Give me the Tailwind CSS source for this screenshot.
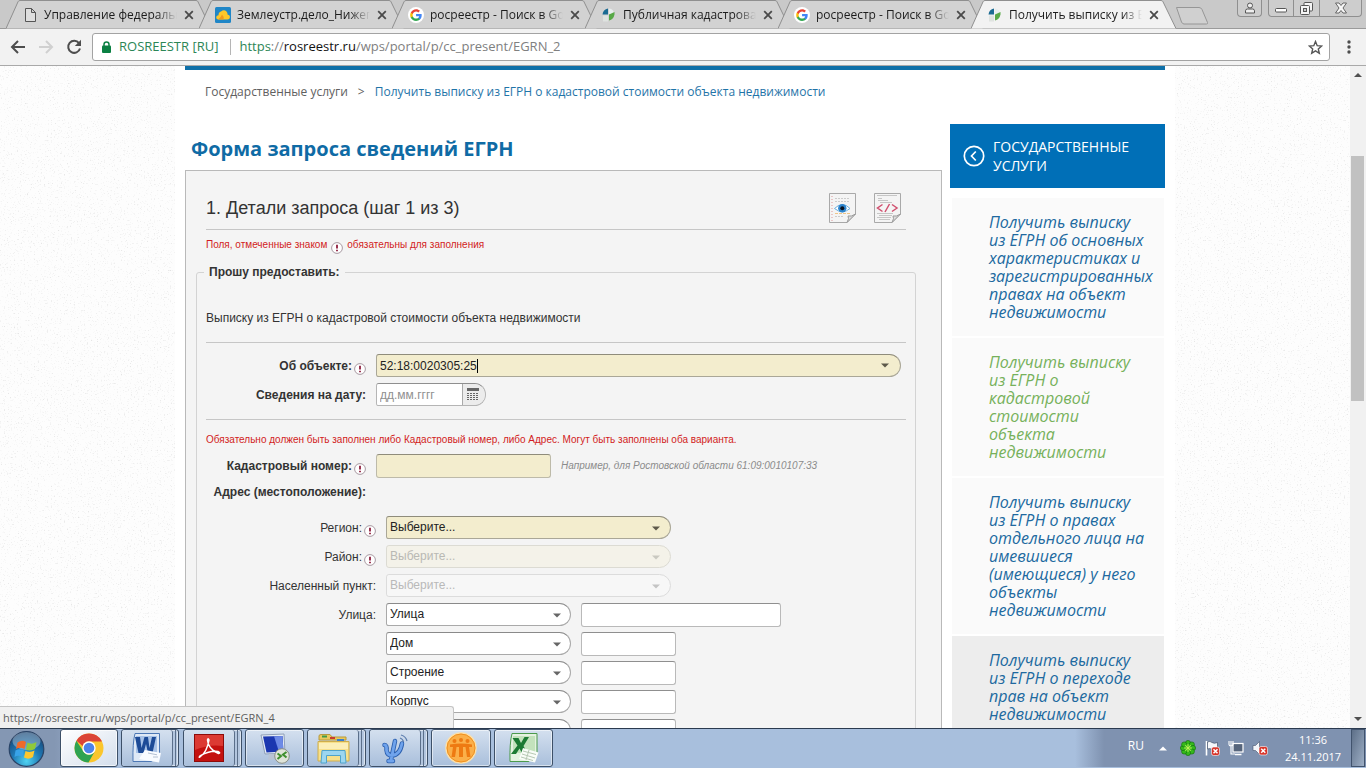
<!DOCTYPE html>
<html lang="ru">
<head>
<meta charset="utf-8">
<title>Получить выписку из ЕГРН</title>
<script src="https://cdn.jsdelivr.net/npm/@tailwindcss/browser@4"></script>
</head>
<body class="h-screen flex flex-col overflow-hidden bg-white font-['Open_Sans',sans-serif] text-[12px] text-[#333]">

<!-- Shared symbols -->
<svg class="hidden" aria-hidden="true">
  <symbol id="tab-shape" viewBox="0 0 205 29"><path d="M0 28.5 L12 1.8 Q12.600 .5 14 .5 H190 Q191.500 .5 192 1.800 L205 28.500" stroke="#8f8f8f"/></symbol>
  <symbol id="close" viewBox="0 0 10 10"><path d="M1.200 1.200 8.800 8.800M8.800 1.200 1.200 8.800" stroke="#4a4a4a" stroke-width="1.800" fill="none"/></symbol>
  <symbol id="google" viewBox="0 0 24 24"><circle cx="12" cy="12" r="12" fill="#fff"/><g transform="translate(2.500 2.500) scale(.8)"><path fill="#4285F4" d="M22.560 12.250c0-.78-.07-1.530-.2-2.250H12v4.260h5.920c-.26 1.370-1.040 2.530-2.210 3.310v2.770h3.570c2.080-1.920 3.280-4.740 3.280-8.090z"/><path fill="#34A853" d="M12 23c2.970 0 5.460-.98 7.280-2.660l-3.570-2.770c-.98.66-2.230 1.060-3.710 1.060-2.860 0-5.290-1.930-6.160-4.530H2.180v2.840C3.990 20.530 7.700 23 12 23z"/><path fill="#FBBC05" d="M5.840 14.090c-.22-.66-.35-1.360-.35-2.090s.13-1.430.35-2.090V7.070H2.180C1.430 8.550 1 10.220 1 12s.43 3.450 1.180 4.930l3.660-2.840z"/><path fill="#EA4335" d="M12 5.380c1.620 0 3.060.56 4.210 1.640l3.150-3.150C17.450 2.090 14.970 1 12 1 7.700 1 3.990 3.470 2.180 7.070l3.660 2.840c.87-2.600 3.300-4.530 6.160-4.530z"/></g></symbol>
  <symbol id="rosreestr" viewBox="0 0 16 16"><path d="M7 1.500v6H1.500Q2 2.500 7 1.500z" fill="#1b6b93"/><path d="M8 1.500Q13 2 13 7H8z" fill="#e8eeee"/><path d="M8 7.500L13.500 5V7.500Q12.500 12.500 8 13.500z" fill="#58a947"/><path d="M2 8.500H7V14.500H2z" fill="#dfe3e0"/></symbol>
  <symbol id="req" viewBox="0 0 12 12"><circle cx="6" cy="6" r="5.400" fill="#fff" stroke="#a89aa2"/><path d="M6 2.800V6.600M6 7.800V9.200" stroke="#8e1d3c" stroke-width="1.800"/></symbol>
  <symbol id="caret" viewBox="0 0 8 5"><path d="M0 .5H8L4 4.500z" fill="currentColor"/></symbol>
  <linearGradient id="paper" x2="1" y2="1"><stop stop-color="#fff"/><stop offset="1" stop-color="#f3f3f3"/></linearGradient>
</svg>

<!-- Tab strip -->
<header class="relative flex h-[29px] shrink-0 border-b border-[#9a9a9a] bg-[#c9c9c9] pl-[6px] text-[#1c1c1c]">
  <nav class="flex" aria-label="Вкладки">
    <div class="relative h-[29px] w-[193px]">
      <svg class="absolute left-0 top-0 h-[29px] w-[205px]" fill="#d2d2d2"><use href="#tab-shape"/></svg>
      <div class="relative flex h-[29px] items-center pl-[17px]">
        <svg class="h-4 w-4 shrink-0" viewBox="0 0 16 16"><path d="M2.500 1.500H8.500L12.500 5.500V14.500H2.500zM8.500 1.500V5.500H12.500" fill="#dedede" stroke="#555"/></svg>
        <a href="#" class="ml-[5px] w-[133px] overflow-hidden whitespace-nowrap mask-r-from-85%">Управление федеральной</a>
        <button aria-label="Закрыть" class="ml-[7px]"><svg class="h-[10px] w-[10px]"><use href="#close"/></svg></button>
      </div>
    </div>
    <div class="relative h-[29px] w-[193px]">
      <svg class="absolute left-0 top-0 h-[29px] w-[205px]" fill="#d2d2d2"><use href="#tab-shape"/></svg>
      <div class="relative flex h-[29px] items-center pl-[16px]">
        <svg class="h-4 w-4 shrink-0" viewBox="0 0 16 16"><rect width="16" height="16" rx="1.500" fill="#1f86c7"/><path d="M3 12.500Q1 12 1.200 10 1.500 8.200 3.500 8.200 3.500 5 6 4.500 9 2 11.500 4.500 12.800 6 12.500 7.500 15 7.800 15 10 14.800 12.500 12.500 12.500z" fill="#fdc82a"/><path d="M3 12.500Q6 10.500 7 7.500 9 9 8.500 12.500z" fill="#f29a1c"/></svg>
        <a href="#" class="ml-[6px] w-[133px] overflow-hidden whitespace-nowrap mask-r-from-85%">Землеустр.дело_Нижегород</a>
        <button aria-label="Закрыть" class="ml-[7px]"><svg class="h-[10px] w-[10px]"><use href="#close"/></svg></button>
      </div>
    </div>
    <div class="relative h-[29px] w-[193px]">
      <svg class="absolute left-0 top-0 h-[29px] w-[205px]" fill="#d2d2d2"><use href="#tab-shape"/></svg>
      <div class="relative flex h-[29px] items-center pl-[16px]">
        <svg class="h-4 w-4 shrink-0"><use href="#google"/></svg>
        <a href="#" class="ml-[6px] w-[133px] overflow-hidden whitespace-nowrap mask-r-from-85%">росреестр - Поиск в Google</a>
        <button aria-label="Закрыть" class="ml-[7px]"><svg class="h-[10px] w-[10px]"><use href="#close"/></svg></button>
      </div>
    </div>
    <div class="relative h-[29px] w-[193px]">
      <svg class="absolute left-0 top-0 h-[29px] w-[205px]" fill="#d2d2d2"><use href="#tab-shape"/></svg>
      <div class="relative flex h-[29px] items-center pl-[16px]">
        <svg class="h-4 w-4 shrink-0"><use href="#rosreestr"/></svg>
        <a href="#" class="ml-[6px] w-[133px] overflow-hidden whitespace-nowrap mask-r-from-85%">Публичная кадастровая</a>
        <button aria-label="Закрыть" class="ml-[7px]"><svg class="h-[10px] w-[10px]"><use href="#close"/></svg></button>
      </div>
    </div>
    <div class="relative h-[29px] w-[193px]">
      <svg class="absolute left-0 top-0 h-[29px] w-[205px]" fill="#d2d2d2"><use href="#tab-shape"/></svg>
      <div class="relative flex h-[29px] items-center pl-[16px]">
        <svg class="h-4 w-4 shrink-0"><use href="#google"/></svg>
        <a href="#" class="ml-[6px] w-[133px] overflow-hidden whitespace-nowrap mask-r-from-85%">росреестр - Поиск в Google</a>
        <button aria-label="Закрыть" class="ml-[7px]"><svg class="h-[10px] w-[10px]"><use href="#close"/></svg></button>
      </div>
    </div>
    <div class="relative h-[29px] w-[193px]">
      <svg class="absolute left-0 top-0 h-[29px] w-[205px]" fill="#f2f2f2"><use href="#tab-shape"/></svg>
      <div class="relative flex h-[29px] items-center pl-[16px]">
        <svg class="h-4 w-4 shrink-0"><use href="#rosreestr"/></svg>
        <a href="#" aria-current="page" class="ml-[6px] w-[133px] overflow-hidden whitespace-nowrap mask-r-from-85%">Получить выписку из ЕГРН</a>
        <button aria-label="Закрыть" class="ml-[7px]"><svg class="h-[10px] w-[10px]"><use href="#close"/></svg></button>
      </div>
    </div>
  </nav>
  <button aria-label="Новая вкладка" class="mt-[7px] ml-[11px] h-[18px] w-[34px]">
    <svg class="h-[18px] w-[34px]" viewBox="0 0 34 18"><path d="M1.500 .5H24Q26 .5 27 2.500L32.500 15.500Q33 17 31.500 17H9Q7.500 17 6.500 15z" fill="#d0d0d0" stroke="#969696"/></svg>
  </button>
  <div class="ml-auto mr-[4px] flex h-[17px] gap-[6px]">
    <button aria-label="Профиль" class="flex w-[25px] items-center justify-center rounded-b-[4px] border border-t-0 border-[#8f8f8f] bg-[#cdcdcd]">
      <svg class="h-3 w-3" viewBox="0 0 12 12" fill="#eee" stroke="#555"><circle cx="6" cy="3.500" r="2.500"/><path d="M1.500 11V8.800Q1.500 7 3.500 7H8.500Q10.500 7 10.500 8.800V11z"/></svg>
    </button>
    <div class="flex rounded-b-[4px] border border-t-0 border-[#8f8f8f] bg-[#cdcdcd]">
      <button aria-label="Свернуть" class="flex w-[25px] items-center justify-center border-r border-[#8f8f8f]"><svg class="h-3 w-3" viewBox="0 0 12 12"><rect x=".5" y="6.500" width="11" height="3.500" rx="1" fill="#fff" stroke="#555"/></svg></button>
      <button aria-label="Восстановить" class="flex w-[26px] items-center justify-center border-r border-[#8f8f8f]"><svg class="h-[13px] w-[13px]" viewBox="0 0 13 13" fill="#f4f4f4" stroke="#555"><rect x="4" y=".5" width="8.500" height="8.500" rx="1"/><rect x=".5" y="3.500" width="9" height="9" rx="1"/><rect x="3.500" y="6.500" width="3" height="3" fill="#ccc"/></svg></button>
      <button aria-label="Закрыть окно" class="flex w-[41px] items-center justify-center"><svg class="h-3 w-3" viewBox="0 0 12 12"><path d="M.5 1H4L6 3.500 8 1H11.500L8 6 11.500 11H8L6 8.500 4 11H.5L4 6z" fill="#f6f6f6" stroke="#666"/></svg></button>
    </div>
  </div>
</header>

<!-- Address bar -->
<div class="flex h-[37px] shrink-0 items-center border-b border-[#a9a9a9] bg-[#f2f2f2] pl-[10px]">
  <button aria-label="Назад"><svg class="h-4 w-4" viewBox="0 0 16 16" fill="none" stroke="#4d4d4d" stroke-width="2"><path d="M15 8H2.500M8 2 2 8 8 14"/></svg></button>
  <button aria-label="Вперёд" class="ml-[12px]"><svg class="h-4 w-4" viewBox="0 0 16 16" fill="none" stroke="#d0d0d0" stroke-width="2"><path d="M1 8H13.500M8 2 14 8 8 14"/></svg></button>
  <button aria-label="Обновить" class="ml-[12px]"><svg class="h-4 w-4" viewBox="0 0 16 16"><path d="M13 4.200A6 6 0 1 0 14 9.500" fill="none" stroke="#4d4d4d" stroke-width="2"/><path d="M15 .8V7H8.800z" fill="#4d4d4d"/></svg></button>
  <div class="ml-[10px] flex h-[28px] flex-1 items-center rounded-[3px] border border-[#a3a3a3] bg-white pl-[9px] pr-[6px] text-[13px]">
    <svg class="h-[12px] w-[9px]" viewBox="0 0 9 12"><path d="M2 5.500V3.500Q2 1 4.500 1 7 1 7 3.500V5.500" fill="none" stroke="#0b8043" stroke-width="1.500"/><rect y="4.500" width="9" height="7.500" rx="1" fill="#0b8043"/></svg>
    <span class="ml-[8px] text-[#2c8656]">ROSREESTR [RU]</span>
    <span class="ml-[12px] h-4 w-px bg-[#b5b5b5]"></span>
    <span class="ml-[8px] flex-1 text-[#808080]"><span class="text-[#2c8656]">https</span>://<span class="text-[#111]">rosreestr.ru</span>/wps/portal/p/cc_present/EGRN_2</span>
    <button aria-label="Добавить в закладки"><svg class="h-[15px] w-[15px]" viewBox="0 0 15 15"><path d="M7.500 1.500 9.200 5.700 13.700 6 10.300 8.900 11.300 13.300 7.500 10.900 3.700 13.300 4.700 8.900 1.300 6 5.800 5.700z" fill="none" stroke="#555" stroke-width="1.400"/></svg></button>
  </div>
  <button aria-label="Меню" class="ml-[17px] mr-[15px]"><svg class="h-[14px] w-[4px]" viewBox="0 0 4 14" fill="#4d4d4d"><circle cx="2" cy="2" r="1.700"/><circle cx="2" cy="7" r="1.700"/><circle cx="2" cy="12" r="1.700"/></svg></button>
</div>

<!-- Viewport -->
<div class="relative flex min-h-0 flex-1">
  <div class="relative min-w-0 flex-1 overflow-hidden bg-[#fdfdfd]">
    <svg class="absolute inset-0 h-full w-full" aria-hidden="true">
      <filter id="grain" x="0" y="0" width="100%" height="100%"><feTurbulence type="fractalNoise" baseFrequency=".7" numOctaves="2" seed="4"/><feColorMatrix values="0 0 0 0 .5  0 0 0 0 .5  0 0 0 0 .5  1.300 0 0 0 -.78"/></filter>
      <rect width="100%" height="100%" filter="url(#grain)"/>
    </svg>
    <main class="relative mx-auto min-h-full w-full max-w-[1000px] bg-white px-[10px]">
      <div class="h-[4px] bg-[#0f70a8]"></div>
      <nav class="flex gap-[10px] pl-[20px] pt-[12px] text-[12px] leading-[20px]" aria-label="Навигация">
        <a href="#" class="text-[#606060]">Государственные услуги</a>
        <span class="text-[#606060]">&gt;</span>
        <a href="#" class="text-[#1f74a8]">Получить выписку из ЕГРН о кадастровой стоимости объекта недвижимости</a>
      </nav>
      <div class="mt-[22px] flex gap-[8px]">
        <section class="min-w-0 flex-1">
          <h1 class="h-[46px] pl-[6px] text-[20px] font-bold leading-[50px] text-[#0f6ba5]">Форма запроса сведений ЕГРН</h1>
          <form class="border border-[#b9b9b9] bg-[#f4f4f4] pb-10 pt-[20px] font-['Liberation_Sans',Arial,sans-serif] text-[12px] leading-[16px]">
            <div class="ml-[20px] mr-[35px] flex h-[39px] items-center border-b border-[#c6c6c6]">
              <h2 class="pb-[4px] text-[18px]">1. Детали запроса (шаг 1 из 3)</h2>
              <button type="button" aria-label="Просмотр" class="mb-[4px] ml-auto"><svg class="h-[30px] w-[27px]" viewBox="0 0 27 30"><path d="M.5 .5H26.500V21L18 29.500H.5z" fill="url(#paper)" stroke="#a9a9a9"/><path d="M26.500 21 18 29.500Q20.500 25 19 23 22 24 26.500 21z" fill="#ddd" stroke="#999"/><path d="M3 3V28" stroke="#d99" stroke-dasharray="1 2"/><path d="M6 5.500H20M6 8.500H21M6 23.500H15" stroke="#ccc" stroke-dasharray="2 1"/><path d="M6 20.500H21" stroke="#edc58a" stroke-dasharray="3 1"/><path d="M5.500 15.500Q13.500 7.500 21 15.500 13.500 22 5.500 15.500z" fill="#fff" stroke="#69afe0"/><circle cx="13.300" cy="15.200" r="4.200" fill="#2d84cc"/><circle cx="13.300" cy="15.200" r="2" fill="#0a1320"/></svg></button>
              <button type="button" aria-label="Показать XML" class="mb-[4px] ml-[18px] mr-[5px]"><svg class="h-[30px] w-[27px]" viewBox="0 0 27 30"><path d="M.5 .5H26.500V21L18 29.500H.5z" fill="url(#paper)" stroke="#a9a9a9"/><path d="M26.500 21 18 29.500Q20.500 25 19 23 22 24 26.500 21z" fill="#ddd" stroke="#999"/><path d="M3 2.500H23M4 5.500H8M4 7.500H14M6 9.500H18M3 20.500H19M5 22.500H18M3 24.500H17M5 26.500H16" stroke="#c6c6c6"/><path d="M8.500 11.500 3.500 15 8.500 18.500M18 11.500 23 15 18 18.500M15.500 11 11 19" fill="none" stroke="#d0506f" stroke-width="1.500"/></svg></button>
            </div>
            <p class="ml-[20px] flex h-[20px] items-center gap-[4px] mt-[5px] text-[10px] text-[#d21c22]">Поля, отмеченные знаком <svg class="mt-[6px] h-3 w-3"><use href="#req"/></svg> обязательны для заполнения</p>
            <fieldset class="ml-[10px] mr-[25px] mt-[9px] rounded-[3px] border border-[#d3d3d3] px-[9px]">
              <legend class="px-[5px] font-bold -ml-[2px]">Прошу предоставить:</legend>
              <p class="border-b border-[#c6c6c6] pb-[16px] pt-[30px]">Выписку из ЕГРН о кадастровой стоимости объекта недвижимости</p>
              <div class="flex flex-col gap-[6px] border-b border-[#c6c6c6] pb-[13px] pt-[11px]">
                <div class="flex h-[23px] items-center gap-[10px]">
                  <label for="obj" class="flex w-[160px] items-center justify-end gap-[2px] font-bold">Об объекте:<svg class="mt-[6px] h-3 w-3"><use href="#req"/></svg></label>
                  <div class="mr-[5px] flex h-[23px] flex-1 items-center rounded-l-[3px] rounded-r-[12px] border border-[#aaa797] border-t-[#8f8c7b] bg-[#f3edce] pl-[3px] pr-[11px]">
                    <input id="obj" value="52:18:0020305:25" class="field-sizing-content bg-transparent text-[#222] outline-none">
                    <span class="h-[14px] w-px bg-black"></span>
                    <svg class="ml-auto h-[5px] w-[8px] text-[#5d594a]"><use href="#caret"/></svg>
                  </div>
                </div>
                <div class="flex h-[23px] items-center gap-[10px]">
                  <label for="date" class="w-[160px] text-right font-bold">Сведения на дату:</label>
                  <div class="flex h-[23px] w-[110px] overflow-hidden rounded-l-[3px] rounded-r-[12px] border border-[#b5b5b5] border-t-[#8f8f8f]">
                    <input id="date" placeholder="дд.мм.гггг" class="w-[86px] border-r border-[#aaa] bg-white pl-[3px] outline-none placeholder:text-[#8f8f8f]">
                    <button type="button" aria-label="Календарь" class="flex flex-1 items-center bg-[#ececec] pl-[4px]"><svg class="h-[13px] w-[12px]" viewBox="0 0 12 13" fill="#666"><path d="M0 0h12v3H0zM0 5h2v1H0zM3 5h2v1H3zM6 5h2v1H6zM9 5h2v1H9zM0 7h2v1H0zM3 7h2v1H3zM6 7h2v1H6zM9 7h2v1H9zM0 9h2v1H0zM3 9h2v1H3zM6 9h2v1H6zM9 9h2v1H9zM0 11h2v1H0zM3 11h2v1H3zM6 11h2v1H6zM9 11h2v1H9z"/></svg></button>
                  </div>
                </div>
              </div>
              <p class="mt-[12px] text-[10px] text-[#d21c22]">Обязательно должен быть заполнен либо Кадастровый номер, либо Адрес. Могут быть заполнены оба варианта.</p>
              <div class="mt-[6px] flex h-[24px] items-center gap-[10px]">
                <label for="cad" class="flex w-[160px] items-center justify-end gap-[2px] font-bold">Кадастровый номер:<svg class="mt-[6px] h-3 w-3"><use href="#req"/></svg></label>
                <input id="cad" class="h-[24px] w-[175px] rounded-[3px] border border-[#bdbaa9] border-t-[#8f8c7b] bg-[#f3edce] px-[3px]">
                <span class="text-[10px] italic text-[#8b8b8b]">Например, для Ростовской области 61:09:0010107:33</span>
              </div>
              <p class="mt-[6px] w-[160px] text-right font-bold">Адрес (местоположение):</p>
              <div class="mt-[16px] flex flex-col gap-[5px]">
                <div class="flex h-[24px] items-start gap-[10px]">
                  <label for="region" class="flex h-[24px] w-[170px] items-center justify-end gap-[2px]">Регион:<svg class="mt-[6px] h-3 w-3"><use href="#req"/></svg></label>
                  <div class="relative"><select id="region" class="h-[23px] w-[285px] appearance-none rounded-l-[3px] rounded-r-[12px] border border-[#aaa797] border-t-[#8f8c7b] bg-[#f3edce] pb-[2px] pl-[3px] text-[#222]"><option>Выберите...</option></select><svg class="pointer-events-none absolute right-[11px] top-[10px] h-[5px] w-[8px] text-[#5d594a]"><use href="#caret"/></svg></div>
                </div>
                <div class="flex h-[24px] items-start gap-[10px]">
                  <label for="district" class="flex h-[24px] w-[170px] items-center justify-end gap-[2px]">Район:<svg class="mt-[6px] h-3 w-3"><use href="#req"/></svg></label>
                  <div class="relative"><select id="district" disabled class="h-[23px] w-[285px] appearance-none rounded-l-[3px] rounded-r-[12px] border border-[#dcdbd3] bg-[#f4f2e9] pb-[2px] pl-[3px] text-[#b9b9b4] opacity-100"><option>Выберите...</option></select><svg class="pointer-events-none absolute right-[11px] top-[10px] h-[5px] w-[8px] text-[#c9c8c0]"><use href="#caret"/></svg></div>
                </div>
                <div class="flex h-[24px] items-start gap-[10px]">
                  <label for="town" class="flex h-[24px] w-[170px] items-center justify-end">Населенный пункт:</label>
                  <div class="relative"><select id="town" disabled class="h-[23px] w-[285px] appearance-none rounded-l-[3px] rounded-r-[12px] border border-[#dcdcdc] bg-[#f7f7f7] pb-[2px] pl-[3px] text-[#b9b9b9] opacity-100"><option>Выберите...</option></select><svg class="pointer-events-none absolute right-[11px] top-[10px] h-[5px] w-[8px] text-[#c4c4c4]"><use href="#caret"/></svg></div>
                </div>
                <div class="flex h-[24px] items-start gap-[10px]">
                  <label for="street" class="flex h-[24px] w-[170px] items-center justify-end">Улица:</label>
                  <div class="relative"><select id="street" class="h-[23px] w-[185px] appearance-none rounded-l-[3px] rounded-r-[12px] border border-[#a9a9a9] border-t-[#8a8a8a] bg-white pb-[2px] pl-[3px] text-[#222]"><option>Улица</option></select><svg class="pointer-events-none absolute right-[10px] top-[10px] h-[5px] w-[8px] text-[#666]"><use href="#caret"/></svg></div>
                  <input aria-label="Название улицы" class="h-[24px] w-[200px] rounded-[3px] border border-[#b9b9b9] border-t-[#8f8f8f] bg-white px-[3px]">
                </div>
                <div class="flex h-[24px] items-start gap-[10px] pl-[180px]">
                  <div class="relative"><select aria-label="Дом" class="h-[23px] w-[185px] appearance-none rounded-l-[3px] rounded-r-[12px] border border-[#a9a9a9] border-t-[#8a8a8a] bg-white pb-[2px] pl-[3px] text-[#222]"><option>Дом</option></select><svg class="pointer-events-none absolute right-[10px] top-[10px] h-[5px] w-[8px] text-[#666]"><use href="#caret"/></svg></div>
                  <input aria-label="Номер дома" class="h-[24px] w-[95px] rounded-[3px] border border-[#b9b9b9] border-t-[#8f8f8f] bg-white px-[3px]">
                </div>
                <div class="flex h-[24px] items-start gap-[10px] pl-[180px]">
                  <div class="relative"><select aria-label="Строение" class="h-[23px] w-[185px] appearance-none rounded-l-[3px] rounded-r-[12px] border border-[#a9a9a9] border-t-[#8a8a8a] bg-white pb-[2px] pl-[3px] text-[#222]"><option>Строение</option></select><svg class="pointer-events-none absolute right-[10px] top-[10px] h-[5px] w-[8px] text-[#666]"><use href="#caret"/></svg></div>
                  <input aria-label="Номер строения" class="h-[24px] w-[95px] rounded-[3px] border border-[#b9b9b9] border-t-[#8f8f8f] bg-white px-[3px]">
                </div>
                <div class="flex h-[24px] items-start gap-[10px] pl-[180px]">
                  <div class="relative"><select aria-label="Корпус" class="h-[23px] w-[185px] appearance-none rounded-l-[3px] rounded-r-[12px] border border-[#a9a9a9] border-t-[#8a8a8a] bg-white pb-[2px] pl-[3px] text-[#222]"><option>Корпус</option></select><svg class="pointer-events-none absolute right-[10px] top-[10px] h-[5px] w-[8px] text-[#666]"><use href="#caret"/></svg></div>
                  <input aria-label="Номер корпуса" class="h-[24px] w-[95px] rounded-[3px] border border-[#b9b9b9] border-t-[#8f8f8f] bg-white px-[3px]">
                </div>
                <div class="flex h-[24px] items-start gap-[10px] pl-[180px]">
                  <select aria-label="Помещение" class="h-[23px] w-[185px] appearance-none rounded-l-[3px] rounded-r-[12px] border border-[#a9a9a9] border-t-[#8a8a8a] bg-white"></select>
                  <input aria-label="Номер помещения" class="h-[24px] w-[95px] rounded-[3px] border border-[#b9b9b9] border-t-[#8f8f8f] bg-white px-[3px]">
                </div>
              </div>
            </fieldset>
          </form>
        </section>

        <aside class="w-[215px] shrink-0">
          <a href="#" class="flex h-[64px] items-center gap-[8px] bg-[#006fb7] pl-[13px] text-[14px] uppercase leading-[19px] text-white">
            <svg class="h-[22px] w-[22px] shrink-0" viewBox="0 0 22 22" fill="none" stroke="#fff" stroke-width="1.700"><circle cx="11" cy="11" r="9.700"/><path d="M12.800 6.500 8.500 11 12.800 15.500"/></svg>
            <span>Государственные услуги</span>
          </a>
          <nav class="ml-[2px] mr-px mt-[10px] flex flex-col gap-[2px] text-[16px] italic leading-[18px] text-[#20699f]" aria-label="Услуги">
            <a href="#" class="bg-[#fafafa] py-[15px] pl-[37px]">Получить выписку<br>из ЕГРН об основных<br>характеристиках и<br>зарегистрированных<br>правах на объект<br>недвижимости</a>
            <a href="#" class="bg-[#fafafa] py-[15px] pl-[37px] text-[#76b15b]">Получить выписку<br>из ЕГРН о<br>кадастровой<br>стоимости<br>объекта<br>недвижимости</a>
            <a href="#" class="bg-[#fafafa] py-[15px] pl-[37px]">Получить выписку<br>из ЕГРН о правах<br>отдельного лица на<br>имевшиеся<br>(имеющиеся) у него<br>объекты<br>недвижимости</a>
            <a href="#" class="bg-[#ededed] py-[15px] pl-[37px]">Получить выписку<br>из ЕГРН о переходе<br>прав на объект<br>недвижимости</a>
          </nav>
        </aside>
      </div>
    </main>
  </div>

  <div class="flex w-[16px] shrink-0 flex-col items-center bg-[#f1f1f1]" aria-hidden="true">
    <svg class="h-[17px] w-[16px] shrink-0" viewBox="0 0 16 17"><path d="M4 11 8 7 12 11z" fill="#505050"/></svg>
    <div class="min-h-0 w-full flex-1 px-px pt-[73px]"><div class="h-[245px] w-[13px] bg-[#c1c1c1]"></div></div>
    <svg class="h-[17px] w-[16px] shrink-0" viewBox="0 0 16 17"><path d="M4 6 8 10 12 6z" fill="#505050"/></svg>
  </div>

  <div class="absolute bottom-0 left-0 h-[22px] w-[454px] rounded-tr-[3px] border-r border-t border-[#c4c4c4] bg-[#f0f0f0] pl-[3px] text-[11px] leading-[22px] text-[#5f5f5f]">https://rosreestr.ru/wps/portal/p/cc_present/EGRN_4</div>
</div>

<!-- Taskbar -->
<footer class="flex h-[40px] shrink-0 items-stretch border-t border-[#2b3a4f] bg-linear-to-r from-[#8497b3] from-4% via-[#a8bfdd] via-8% to-[#a8bfdd] pb-px">
  <button aria-label="Пуск" class="ml-[8px] w-[37px]">
    <svg class="h-[37px] w-[37px]" viewBox="0 0 37 37"><defs><radialGradient id="orb" cx=".5" cy=".85" r=".9"><stop stop-color="#4fd3f2"/><stop offset=".45" stop-color="#1f79b5"/><stop offset="1" stop-color="#123a68"/></radialGradient></defs><circle cx="18.500" cy="19" r="17.300" fill="url(#orb)" stroke="#2a4467" stroke-width="1.200"/><ellipse cx="18.500" cy="11" rx="14" ry="9" fill="#fff" opacity=".32"/><path d="M9.500 12.500Q14 9.500 18 12L16.500 19Q12.500 16.500 8 19z" fill="#ef6a2a"/><path d="M19.500 12.500Q23.500 15 28.500 12L27 19Q22.500 21.500 18 19.500z" fill="#8fc93a"/><path d="M7.500 20.500Q12 18 16 20.500L14.500 27Q10.500 24.500 6.500 27z" fill="#38a3e8"/><path d="M17.500 21Q22 23 26.500 20.500L25 27Q20.500 30 16 27.500z" fill="#fdc72f"/></svg>
  </button>
  <button aria-label="Chrome" class="ml-[15px] flex w-[58px] items-center justify-center rounded-[3px] border border-[#3d5068] bg-linear-to-br from-white to-[#d3deec] shadow-[inset_0_0_0_1px_#ffffffaa]">
    <svg class="h-[30px] w-[30px]" viewBox="0 0 30 30"><circle cx="15" cy="15" r="14.500" fill="#fbc62c"/><path d="M2.440 7.750A14.500 14.500 0 0 1 27.560 7.750L27.800 8.400H15A6.600 6.600 0 0 0 8.700 13z" fill="#db4437"/><path d="M2.440 7.750A14.500 14.500 0 0 0 14.500 29.500L20.700 18.400A6.600 6.600 0 0 1 9.300 18.300z" fill="#2ea352"/><circle cx="15" cy="15" r="6.700" fill="#fff"/><circle cx="15" cy="15" r="5.300" fill="#4c83ea"/></svg>
  </button>
  <button aria-label="Word" class="ml-[3px] flex w-[58px] rounded-[3px] border border-[#3d5068] bg-[#b3c6df] shadow-[inset_0_0_0_1px_#ffffff88]">
    <span class="flex h-full w-[51px] items-center justify-center rounded-[3px] border-r border-[#5b6f8a] bg-linear-to-b from-[#d4e0ef] to-[#a9bfdb]">
      <svg class="h-[30px] w-[30px]" viewBox="0 0 30 30"><path d="M3 .5H27.500V20L20 28.500H1Q.5 10 3 .5z" fill="#dfe9f6" stroke="#4d78b5"/><path d="M4 3H25V20H4z" fill="#a9c3e8"/><path d="M3 4H8L9.500 15 12.500 4H16L17.500 15 20 4H24L20.500 20H16L14 11 11.500 20H6.500z" fill="#1d4b97"/><path d="M13 17 29 20 27 29.500 7 26z" fill="#f8fbff"/><path d="M16 20 25 21.800M21 24H26" stroke="#b4c0d2"/></svg>
    </span><span class="h-full w-[3px] border-r border-[#5b6f8a]"></span>
  </button>
  <button aria-label="Acrobat Reader" class="ml-[4px] flex w-[59px] rounded-[3px] border border-[#3d5068] bg-[#b3c6df] shadow-[inset_0_0_0_1px_#ffffff88]">
    <span class="flex h-full w-[51px] items-center justify-center rounded-[3px] border-r border-[#5b6f8a] bg-linear-to-b from-[#d4e0ef] to-[#a9bfdb]">
      <svg class="h-[28px] w-[30px]" viewBox="0 0 30 28"><rect x=".5" y=".5" width="29" height="27" fill="#c4110f" stroke="#8d0b0a"/><path d="M1 1H29V12Q15 10 1 16z" fill="#dc3a33"/><path d="M6 23Q13 18 15 6 14 3.500 13.500 6 14 15 24.500 19.500 27 19 24 17.500 15 16.500 6 22 4.500 24 6 23z" fill="none" stroke="#fff" stroke-width="1.500"/></svg>
    </span><span class="h-full w-[3px] border-r border-[#5b6f8a]"></span>
  </button>
  <button aria-label="Удалённый рабочий стол" class="ml-[3px] flex w-[59px] items-center justify-center rounded-[3px] border border-[#3d5068] bg-linear-to-b from-[#d4e0ef] to-[#a9bfdb] shadow-[inset_0_0_0_1px_#ffffff88]">
    <svg class="h-[31px] w-[31px]" viewBox="0 0 31 31"><path d="M2 2 25 1 26 20 6 21z" fill="#e4ebf5" stroke="#8fa0b8"/><path d="M4 3.500 23.500 3 24.500 18.500 7.500 19.500z" fill="#1b37b0"/><path d="M15 3.200 23.500 3 24.500 18.500 20 19z" fill="#6d8ae6"/><path d="M10 21 18 20.500 20 26 9 27z" fill="#b9c4d4"/><circle cx="23" cy="23" r="7.300" fill="#dfe4d9" stroke="#8a8f86"/><path d="M18.500 20.500 22 23 18.500 26M27.500 19 24 21.500 27.500 24.500" fill="none" stroke="#3f8f2e" stroke-width="2"/></svg>
  </button>
  <button aria-label="Проводник" class="ml-[3px] flex w-[59px] rounded-[3px] border border-[#3d5068] bg-[#b3c6df] shadow-[inset_0_0_0_1px_#ffffff88]">
    <span class="flex h-full w-[51px] items-center justify-center rounded-[3px] border-r border-[#5b6f8a] bg-linear-to-b from-[#d4e0ef] to-[#a9bfdb]">
      <svg class="h-[31px] w-[33px]" viewBox="0 0 33 31"><path d="M2 3Q2 1.500 4 1.500H13L15 4H29V7H2z" fill="#e9c95e" stroke="#b89a3c"/><path d="M5 2.500h5v2H5z" fill="#3f9a46"/><path d="M13 4h5v2H13z" fill="#c93b30"/><path d="M20 6h7v2H20z" fill="#3a7fd0"/><path d="M1 8.500H32V28H1z" fill="#f7e08b" stroke="#cfae4c"/><path d="M2 10H31V16H2z" fill="#fcefb8"/><path d="M5 17.500H28L29 30H23.500V22.500H9.500V30H4z" fill="#9bd6f0" stroke="#4fa3ca"/></svg>
    </span><span class="h-full w-[3px] border-r border-[#5b6f8a]"></span>
  </button>
  <button aria-label="Система" class="ml-[3px] flex w-[59px] rounded-[3px] border border-[#3d5068] bg-[#b3c6df] shadow-[inset_0_0_0_1px_#ffffff88]">
    <span class="flex h-full w-[51px] items-center justify-center rounded-[3px] border-r border-[#5b6f8a] bg-linear-to-b from-[#d4e0ef] to-[#a9bfdb]">
      <svg class="h-[31px] w-[28px]" viewBox="0 0 28 31" fill="none"><g stroke-linecap="round"><path d="M3.500 12Q6 12 5.500 17 6 22.500 11 22.500 19 22 21 10.500M14 8 10 27M7.500 28H12" stroke="#2b5fae" stroke-width="4.500"/><path d="M3.500 12Q6 12 5.500 17 6 22.500 11 22.500 19 22 21 10.500M14 8 10 27M7.500 28H12" stroke="#6fa3ec" stroke-width="2.800"/></g><path d="M19 5Q22 6 22.500 9M20 2Q25 3.500 26 8" stroke="#5e7fae" stroke-width="1.300"/></svg>
    </span><span class="h-full w-[3px] border-r border-[#5b6f8a]"></span>
  </button>
  <button aria-label="Росреестр" class="ml-[3px] flex w-[60px] items-center justify-center rounded-[3px] border border-[#3d5068] bg-linear-to-b from-[#d4e0ef] to-[#a9bfdb] shadow-[inset_0_0_0_1px_#ffffff88]">
    <svg class="h-[32px] w-[32px]" viewBox="0 0 32 32"><circle cx="16" cy="16" r="15" fill="#fbb04a" stroke="#fde0a8" stroke-width="1.500"/><circle cx="16" cy="16" r="14" fill="none" stroke="#f0901f"/><g fill="#ee7a12"><circle cx="9.500" cy="9" r="2"/><circle cx="16" cy="8" r="2"/><circle cx="22.500" cy="9" r="2"/><path d="M5 12.500Q16 10.500 27 12.500V15H24L25.500 25H22L20.500 15H18V25H14V15H11.500L10 25H6.500L8 15H5z"/></g></svg>
  </button>
  <button aria-label="Excel" class="ml-[3px] flex w-[59px] items-center justify-center rounded-[3px] border border-[#3d5068] bg-linear-to-b from-[#d4e0ef] to-[#a9bfdb] shadow-[inset_0_0_0_1px_#ffffff88]">
    <svg class="h-[30px] w-[30px]" viewBox="0 0 30 30"><path d="M3 .5H28V20L20 28.500H1Q.5 10 3 .5z" fill="#e4f2e0" stroke="#4b9a4c"/><path d="M4 3H26V20H4z" fill="#c3e2bc"/><path d="M3.500 5H9.500L12 10 15.500 4H20L14.500 13 19 21H13.500L10.500 15.500 7 21H2L8.500 12.500z" fill="#1c7a33"/><path d="M14 15 29.500 19.500 26 29.500 10 26z" fill="#f9fdf8"/><path d="M14 18 27 21.500M13 21 26 25M12 24 24 27.500M20 17 17 27" stroke="#b7c9b4"/></svg>
  </button>

  <div class="ml-auto flex items-center bg-linear-to-r from-[#a8bfdd] to-[#7f92b0] to-10% pl-[53px] text-white">
    <span class="text-[12px] leading-[16px] pb-1">RU</span>
    <svg class="ml-[15px] h-[5px] w-[8px]" viewBox="0 0 8 5"><path d="M0 4.500 4 .5 8 4.500z" fill="#fff"/></svg>
    <svg class="ml-[13px] h-4 w-4" viewBox="0 0 16 16"><g fill="#35b81c" stroke="#0f6a0a" stroke-width=".6"><circle cx="8" cy="3" r="2.600"/><circle cx="11.800" cy="4.500" r="2.600"/><circle cx="13" cy="8" r="2.600"/><circle cx="11.800" cy="11.500" r="2.600"/><circle cx="8" cy="13" r="2.600"/><circle cx="4.200" cy="11.500" r="2.600"/><circle cx="3" cy="8" r="2.600"/><circle cx="4.200" cy="4.500" r="2.600"/></g><circle cx="8" cy="8" r="3.500" fill="#3fc322"/><path d="M8 4V12M4 8H12M5.200 5.200 10.800 10.800M10.800 5.200 5.200 10.800" stroke="#c9f25c" stroke-width=".8"/></svg>
    <svg class="ml-[8px] h-4 w-4" viewBox="0 0 16 16"><path d="M2.500 1V15.500" stroke="#fff" stroke-width="1.600"/><path d="M3.500 2Q6 .5 8 2.500 10 4 13.500 2.500V9.500Q10 11 8 9.500 6 8 3.500 9z" fill="#f4f6fa" stroke="#44536c" stroke-width=".7"/><rect x="7.500" y="7" width="8" height="8.500" rx="2" fill="#d8352a" stroke="#fff" stroke-width=".6"/><path d="M9.500 9.200 13.500 13.200M13.500 9.200 9.500 13.200" stroke="#fff" stroke-width="1.500"/></svg>
    <svg class="ml-[8px] h-4 w-4" viewBox="0 0 16 16"><rect x="5" y="3.500" width="10" height="8.500" fill="#56657c" stroke="#fff" stroke-width="1.200"/><path d="M7 14.500H13.500" stroke="#fff" stroke-width="1.500"/><path d="M1 1V4.500Q1 6 3 6T5 4.500V1M3 1V14H7" fill="none" stroke="#fff" stroke-width="1.100"/></svg>
    <svg class="ml-[8px] h-4 w-4" viewBox="0 0 16 16"><path d="M1 5.500H3.500L7.500 1.500V14.500L3.500 10.500H1z" fill="#f4f6fa" stroke="#44536c" stroke-width=".6"/><rect x="7" y="6.500" width="8.500" height="8.500" rx="2" fill="#d8352a" stroke="#fff" stroke-width=".6"/><path d="M9.200 8.700 13.300 12.800M13.300 8.700 9.200 12.800" stroke="#fff" stroke-width="1.500"/></svg>
    <div class="ml-[16px] w-[58px] text-center text-[11px] leading-[17px]"><div>11:36</div><div>24.11.2017</div></div>
    <button aria-label="Показать рабочий стол" class="ml-[9px] mr-px h-full w-[14px] border border-[#41536d] bg-linear-to-br from-[#5d6f88] to-[#9fb0c6]"></button>
  </div>
</footer>
</body>
</html>
